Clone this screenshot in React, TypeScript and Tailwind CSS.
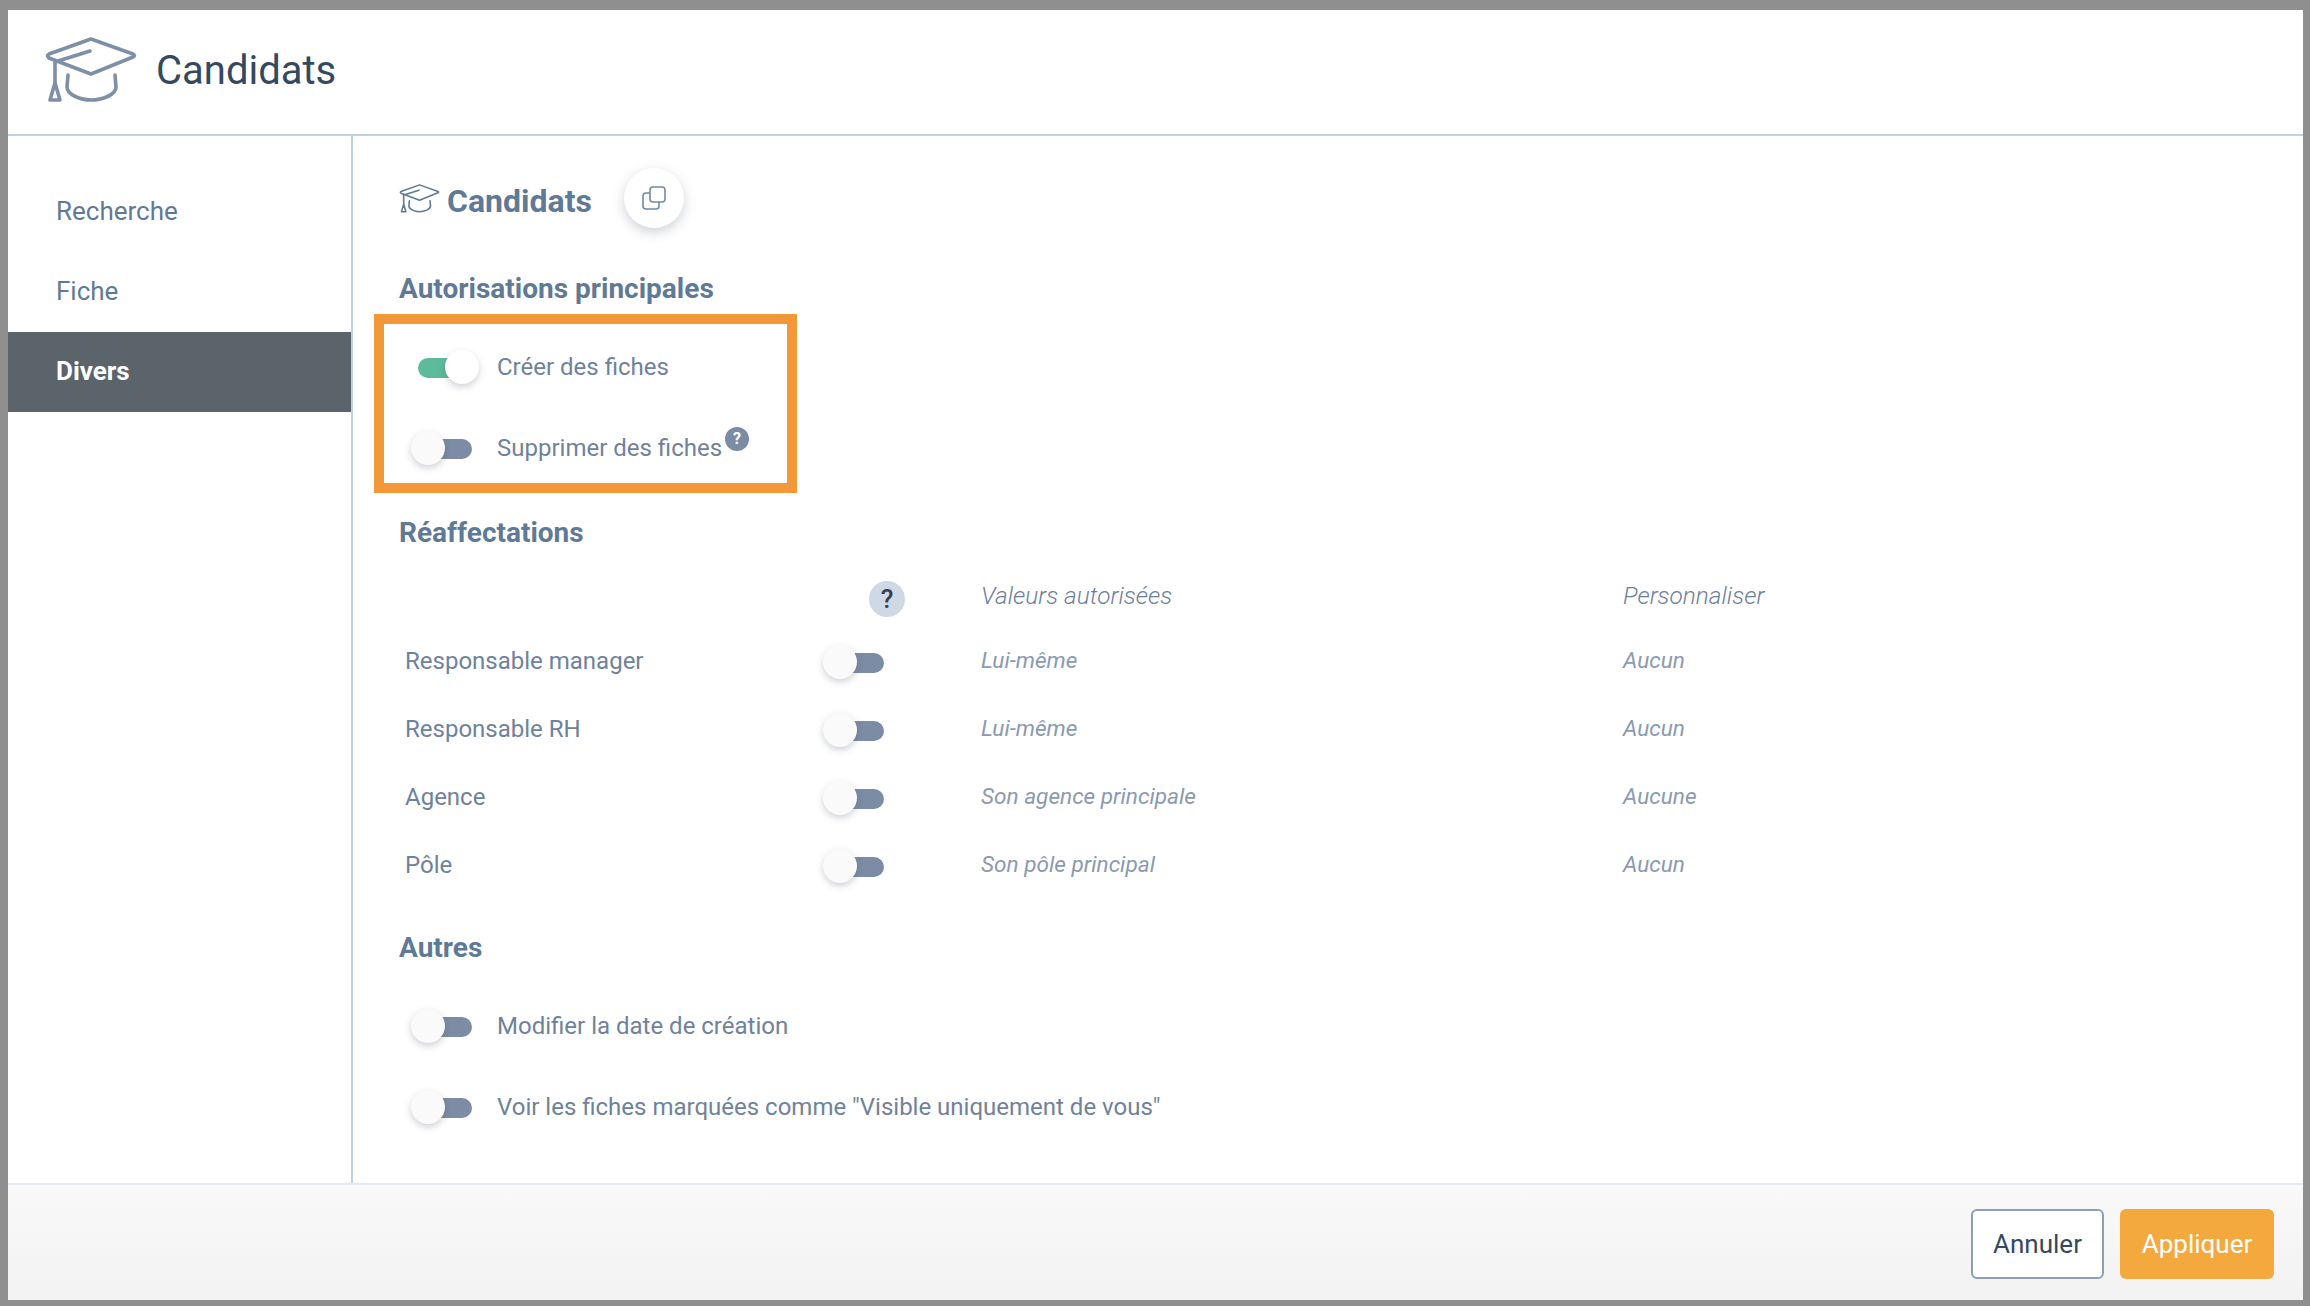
import React from 'react';

const CapIcon = ({ className }: { className: string }) => (
  <svg viewBox="0 0 92 66" fill="none" stroke="currentColor" strokeWidth="3.6" strokeLinecap="round" strokeLinejoin="round" className={className}>
    <path d="M46 2 L88 17 Q91 18.5 88 20 L46 37 L4 21 Q1 18.5 4 17 Z" />
    <path d="M45 14 L10 25 V46" />
    <path d="M10 46 L5 63 H15 Z" />
    <path d="M23 38 L22 50 C22 58 36 63 46 63 C57 63 71 58 71 50 L70 38" />
  </svg>
);

const Toggle = ({ on = false }: { on?: boolean }) => (
  <div className={`relative h-[20px] w-[54px] shrink-0 rounded-full ${on ? 'bg-[#5dbb9c]' : 'bg-[#7c8ca4]'}`}>
    <div
      className={`absolute top-[-8px] h-[34px] w-[34px] rounded-full shadow-[0_3px_7px_rgba(60,70,90,0.25)] ${
        on ? 'right-[-7px] bg-white' : 'left-[-7px] bg-[#fafafa]'
      }`}
    />
  </div>
);

const PermissionRow = ({ label, on, help }: { label: string; on?: boolean; help?: boolean }) => (
  <div className="flex h-[60px] items-center gap-[25px]">
    <Toggle on={on} />
    <div className="relative mb-[2px] text-[24px] text-[#6f829c]">
      {label}
      {help && (
        <span className="absolute right-[-27px] top-[-3px] flex h-[24px] w-[24px] items-center justify-center rounded-full bg-[#7c8ca4] text-[16px] font-bold text-white">
          ?
        </span>
      )}
    </div>
  </div>
);

const SectionTitle = ({ children, className }: { children: React.ReactNode; className: string }) => (
  <h2 className={`flex h-[40px] items-center text-[28px] font-bold text-[#5f7a96] ${className}`}>{children}</h2>
);

const rows = [
  ['Responsable manager', 'Lui-même', 'Aucun'],
  ['Responsable RH', 'Lui-même', 'Aucun'],
  ['Agence', 'Son agence principale', 'Aucune'],
  ['Pôle', 'Son pôle principal', 'Aucun'],
];

export default function App() {
  return (
    <div className="h-[1306px] w-full overflow-hidden bg-[#8f8f8f] pb-[6px] pl-[8px] pr-[7px] pt-[10px] font-['Roboto',sans-serif]">
      <div className="flex h-full flex-col bg-white">
        <header className="flex h-[126px] shrink-0 items-center gap-[19px] border-b-2 border-[#c3d0e0] pb-[2px] pl-[37px]">
          <CapIcon className="mb-[2px] h-[66px] w-[92px] text-[#7e8fa8]" />
          <h1 className="text-[40px] text-[#34495e]">Candidats</h1>
        </header>

        <div className="flex min-h-0 flex-1">
          <nav className="w-[345px] shrink-0 border-r-2 border-[#c3d0e0] pt-[36px] text-[26px] text-[#5f7a96]">
            <div className="flex h-[80px] items-center pb-[1px] pl-[48px]">Recherche</div>
            <div className="flex h-[80px] items-center pb-[1px] pl-[48px]">Fiche</div>
            <div className="flex h-[80px] items-center bg-[#5b636b] pb-[1px] pl-[48px] font-bold text-white">Divers</div>
          </nav>

          <main className="flex-1 pl-[46px] pt-[32px]">
            <div className="flex h-[60px] items-center">
              <CapIcon className="h-[29px] w-[41px] text-[#5f7a96]" />
              <span className="ml-[7px] mt-[5px] text-[32px] font-bold text-[#5f7a96]">Candidats</span>
              <button
                type="button"
                className="ml-[32px] flex h-[60px] w-[60px] items-center justify-center rounded-full bg-white shadow-[0_4px_12px_rgba(60,70,90,0.25)]"
              >
                <svg viewBox="0 0 24 24" fill="none" stroke="#6f8ba8" strokeWidth="1.6" className="h-[24px] w-[24px]">
                  <rect x="8" y="1" width="15" height="15" rx="3" />
                  <path d="M8 7 H4 Q1 7 1 10 V20 Q1 23 4 23 H14 Q17 23 17 20 V16" />
                </svg>
              </button>
            </div>

            <SectionTitle className="mt-[41px]">Autorisations principales</SectionTitle>

            <div className="ml-[-25px] mt-[5px] flex h-[179px] w-[423px] flex-col gap-[21px] border-[10px] border-[#f39837] pl-[34px] pt-[14px]">
              <PermissionRow label="Créer des fiches" on />
              <PermissionRow label="Supprimer des fiches" help />
            </div>

            <SectionTitle className="mt-[20px]">Réaffectations</SectionTitle>

            <div className="ml-[6px] mt-[10px] grid grid-cols-[425px_151px_642px_1fr] text-[#6f829c]">
              <div className="h-[65px]" />
              <div className="flex h-[65px] items-start pl-[39px] pt-[18px]">
                <span className="flex h-[36px] w-[36px] items-center justify-center rounded-full bg-[#cfd8e5] text-[26px] font-medium text-[#2e4057]">
                  ?
                </span>
              </div>
              <div className="flex h-[65px] items-start pt-[15px] text-[24.4px] font-light italic text-[#6d809b]">Valeurs autorisées</div>
              <div className="flex h-[65px] items-start pt-[15px] text-[24.4px] font-light italic text-[#6d809b]">Personnaliser</div>
              {rows.map(([label, value, custom]) => (
                <React.Fragment key={label}>
                  <div className="flex h-[68px] items-center pb-[2px] text-[24px]">{label}</div>
                  <div className="flex h-[68px] items-center pt-[1px]">
                    <Toggle />
                  </div>
                  <div className="flex h-[68px] items-center pb-[2px] text-[22.6px] italic text-[#8a9ab0]">{value}</div>
                  <div className="flex h-[68px] items-center pb-[2px] text-[22.6px] italic text-[#8a9ab0]">{custom}</div>
                </React.Fragment>
              ))}
            </div>

            <SectionTitle className="mt-[28px]">Autres</SectionTitle>

            <div className="mt-[29px] flex flex-col gap-[21px] pl-[19px]">
              <PermissionRow label="Modifier la date de création" />
              <PermissionRow label={'Voir les fiches marquées comme "Visible uniquement de vous"'} />
            </div>
          </main>
        </div>

        <footer className="flex h-[117px] shrink-0 items-start justify-end gap-[16px] border-t-2 border-[#e3e8f2] bg-gradient-to-b from-[#f9f9f9] to-[#f2f2f2] pr-[29px] pt-[24px]">
          <button type="button" className="h-[70px] w-[133px] rounded-[6px] border-2 border-[#8f9fb3] bg-white text-[26px] text-[#34495e]">
            Annuler
          </button>
          <button type="button" className="h-[70px] w-[154px] rounded-[6px] bg-[#f4a93e] text-[26px] text-white">
            Appliquer
          </button>
        </footer>
      </div>
    </div>
  );
}
